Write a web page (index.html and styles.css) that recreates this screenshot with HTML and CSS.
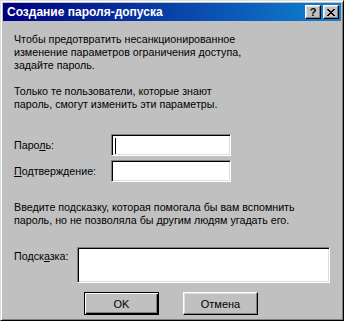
FILE: index.html
```html
<!DOCTYPE html>
<html lang="ru">

<head>
  <meta charset="utf-8">
  <link rel="stylesheet" href="styles.css">
</head>

<body>

  <div class="window">
    <div class="titlebar">
      <span class="title">Создание пароля-допуска</span>
      <div class="title-buttons">
        <button class="tbtn help">?</button>
        <button class="tbtn close">
          <svg width="8" height="7" viewBox="0 0 8 7" shape-rendering="crispEdges">
            <path d="M0 0h2v1h-2zM6 0h2v1h-2zM1 1h2v1h-2zM5 1h2v1h-2zM2 2h4v1h-4zM3 3h2v1h-2zM2 4h4v1h-4zM1 5h2v1h-2zM5 5h2v1h-2zM0 6h2v1h-2zM6 6h2v1h-2z" fill="#000"/>
          </svg>
        </button>
      </div>
    </div>

    <div class="content">
      <p class="text first">Чтобы предотвратить несанкционированное<br>изменение параметров ограничения доступа,<br>задайте пароль.</p>
      <p class="text second">Только те пользователи, которые знают<br>пароль, смогут изменить эти параметры.</p>

      <div class="fields">
        <div class="row">
          <label class="label">Паро<u>л</u>ь:</label>
          <div class="field"><span class="caret"></span></div>
        </div>
        <div class="row">
          <label class="label"><u>П</u>одтверждение:</label>
          <div class="field"></div>
        </div>
      </div>

      <p class="text third">Введите подсказку, которая помогала бы вам вспомнить<br>пароль, но не позволяла бы другим людям угадать его.</p>

      <div class="hint-row">
        <label class="label hint-label">Подск<u>а</u>зка:</label>
        <div class="field hint"></div>
      </div>

      <div class="buttons">
        <button class="button default">OK</button>
        <button class="button">Отмена</button>
      </div>
    </div>
  </div>

</body>

</html>
```

FILE: styles.css
```css
body {
  margin: 0;
  background-color: #c0c0c0;
  font-family: "Liberation Sans", Arial, sans-serif;
  font-size: 10.7px;
  color: #000;
}

.window {
  width: 344px;
  height: 321px;
  box-sizing: border-box;
  border: 1px solid;
  border-color: #dfdfdf #000 #000 #dfdfdf;
  box-shadow: inset 1px 1px #fff, inset -1px -1px #808080;
  padding: 2px;
  background-color: #c0c0c0;
}

.titlebar {
  height: 18px;
  display: flex;
  align-items: center;
  justify-content: space-between;
  background: linear-gradient(to right, #000080, #1084d0);
  padding: 0 2px 0 4px;
}

.title {
  color: #fff;
  font-weight: bold;
  font-size: 12px;
}

.title-buttons {
  display: flex;
  gap: 2px;
}

.tbtn {
  width: 16px;
  height: 14px;
  padding: 0;
  display: flex;
  align-items: center;
  justify-content: center;
  background-color: #c0c0c0;
  border: 1px solid;
  border-color: #fff #000 #000 #fff;
  box-shadow: inset -1px -1px #808080, inset 1px 1px #dfdfdf;
  font-family: "Liberation Sans", Arial, sans-serif;
  font-weight: bold;
  font-size: 11px;
  line-height: 1;
  color: #000;
}

.content {
  padding: 0 11px;
}

.text {
  margin: 0;
  line-height: 13px;
}

.first { margin-top: 12px; }
.second { margin-top: 13px; }
.third { margin-top: 19px; }

.fields {
  margin-top: 23px;
  display: flex;
  flex-direction: column;
  gap: 4px;
}

.row {
  display: flex;
  align-items: center;
}

.row .label { width: 97px; }

.field {
  position: relative;
  width: 120px;
  height: 22px;
  box-sizing: border-box;
  background-color: #fff;
  border: 1px solid;
  border-color: #808080 #fff #fff #808080;
  box-shadow: inset 1px 1px #000, inset -1px -1px #dfdfdf;
}

.caret {
  position: absolute;
  left: 3px;
  top: 3px;
  width: 1px;
  height: 16px;
  background-color: #000;
}

.hint-row {
  margin-top: 20px;
  display: flex;
  align-items: flex-start;
}

.hint-label {
  width: 64px;
  margin-top: 3px;
}

.field.hint {
  width: 255px;
  height: 36px;
}

.buttons {
  margin-top: 9px;
  display: flex;
  justify-content: center;
  gap: 24px;
  padding-right: 2px;
}

.button {
  width: 75px;
  height: 23px;
  padding: 0;
  background-color: #c0c0c0;
  font-family: "Liberation Sans", Arial, sans-serif;
  font-size: 11px;
  color: #000;
  border: 1px solid;
  border-color: #fff #000 #000 #fff;
  box-shadow: inset -1px -1px #808080, inset 1px 1px #dfdfdf;
}

.button.default {
  border-color: #000;
  box-shadow: inset 1px 1px #fff, inset -1px -1px #000, inset -2px -2px #808080;
}
```
